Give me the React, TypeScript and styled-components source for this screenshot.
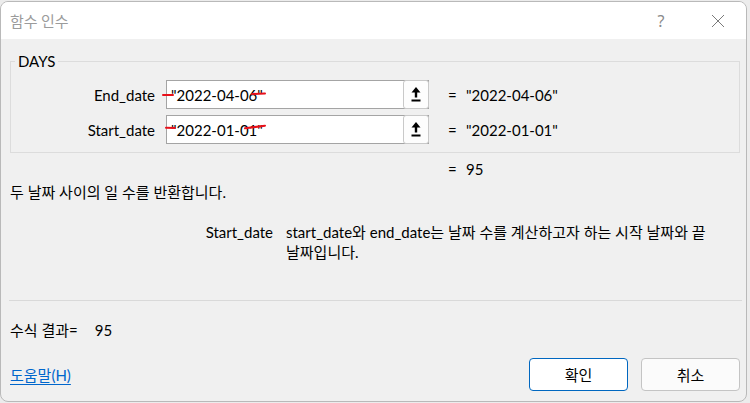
import React from "react";
import styled, { createGlobalStyle } from "styled-components";

const Global = createGlobalStyle`
  html, body { margin: 0; padding: 0; background: #ececec; }
  body { font-family: "Lato", "Noto Sans CJK KR", sans-serif; }
`;

const Window = styled.div`
  margin-top: 1px;
  width: 745px;
  height: 399px;
  border: 1px solid #b9b9b9;
  border-radius: 8px;
  overflow: hidden;
  background: #f0f0f0;
  display: flex;
  flex-direction: column;
  font-size: 15px;
  color: #000;
`;

const TitleBar = styled.div`
  height: 37px;
  background: #fff;
  display: flex;
  align-items: center;
  padding-left: 9px;
  flex-shrink: 0;
`;

const Title = styled.div`
  flex: 1;
  color: #9b9b9b;
  font-size: 15px;
  font-family: "Noto Sans CJK KR", sans-serif;
`;

const TitleButton = styled.div<{ $w: number }>`
  width: ${(p) => p.$w}px;
  height: 37px;
  display: flex;
  align-items: center;
  justify-content: center;
  color: #8a8a8a;
  font-size: 16px;
  font-family: "Noto Sans", sans-serif;
`;

const Body = styled.div`
  display: flex;
  flex-direction: column;
  padding: 0 6px 0 8px;
`;

const Group = styled.fieldset`
  margin: 12px 0 0 1px;
  padding: 0 0 8px 0;
  border: 1px solid #dcdcdc;
  width: 730px;
  box-sizing: border-box;
  min-width: 0;
`;

const Legend = styled.legend`
  margin-left: 4px;
  padding: 0 3px;
  line-height: 20px;
  font-size: 15px;
`;

const ArgGrid = styled.div`
  display: grid;
  grid-template-columns: 144px 263px 8px auto;
  column-gap: 11px;
  row-gap: 6px;
  align-items: center;
  margin-top: 9px;
`;

const ArgLabel = styled.div`
  text-align: right;
  line-height: 20px;
`;

const InputBox = styled.div`
  position: relative;
  height: 29px;
  box-sizing: border-box;
  border: 1px solid #a4a4a4;
  background: #fff;
  display: flex;
  align-items: center;
  padding-left: 4px;
`;

const InputText = styled.span`
  flex: 1;
  line-height: 20px;
`;

const RefButton = styled.div`
  width: 26px;
  height: 29px;
  margin: -1px -1px -1px 0;
  box-sizing: border-box;
  border: 1px solid #c9c9c9;
  border-radius: 3px;
  background: #fdfdfd;
  display: flex;
  align-items: center;
  justify-content: center;
`;

const Marks = styled.svg`
  position: absolute;
  left: -1px;
  top: -1px;
  pointer-events: none;
  overflow: visible;
`;

const Eq = styled.div`
  margin-left: 8px;
  line-height: 20px;
`;

const Value = styled.div`
  margin-left: 7px;
  line-height: 20px;
`;

const ResultRow = styled.div`
  display: grid;
  grid-template-columns: 8px auto;
  column-gap: 10px;
  padding-left: 439px;
  margin-top: 6px;
  line-height: 20px;
`;

const Description = styled.div`
  margin-top: 3px;
  line-height: 20px;
  padding-left: 1px;
`;

const HelpRow = styled.div`
  display: grid;
  grid-template-columns: 264px 1fr;
  column-gap: 13px;
  margin-top: 20px;
  line-height: 20px;
`;

const HelpLabel = styled.div`
  text-align: right;
`;

const Separator = styled.div`
  margin-top: 38px;
  height: 1px;
  width: 733px;
  background: #d9d9d9;
`;

const FormulaResult = styled.div`
  margin-top: 19px;
  line-height: 20px;
  padding-left: 1px;
  display: flex;
`;

const ResultValue = styled.span`
  margin-left: 17px;
`;

const Footer = styled.div`
  margin-top: 18px;
  display: flex;
  align-items: center;
  padding-left: 1px;
`;

const HelpLink = styled.a`
  color: #0066cc;
  text-decoration: underline;
  text-underline-offset: 3px;
  flex: 1;
  line-height: 20px;
  cursor: pointer;
`;

const Button = styled.button<{ $primary?: boolean }>`
  width: 99px;
  height: 33px;
  margin-left: 13px;
  box-sizing: border-box;
  border-radius: 4px;
  border: 1px solid ${(p) => (p.$primary ? "#0067c0" : "#c4c4c4")};
  background: ${(p) => (p.$primary ? "#ffffff" : "#fbfbfb")};
  font-family: "Noto Sans CJK KR", sans-serif;
  font-size: 15px;
  color: #000;
  padding: 0;
`;

const UploadIcon = () => (
  <svg width="10" height="15" viewBox="0 0 10 15">
    <polygon points="5,0 9.5,5.5 0.5,5.5" fill="#000" />
    <rect x="3.8" y="5" width="2.4" height="5.5" fill="#000" />
    <rect x="0.5" y="12.5" width="9" height="2" fill="#000" />
  </svg>
);

type Arg = {
  name: string;
  value: string;
  marks: string[];
};

const args: Arg[] = [
  {
    name: "End_date",
    value: "\"2022-04-06\"",
    marks: ["M-3 15 L7 15", "M86 14 L99 13.5"],
  },
  {
    name: "Start_date",
    value: "\"2022-01-01\"",
    marks: ["M0 12.7 L9 13", "M79 13.3 L99 10.7"],
  },
];

export default function App() {
  return (
    <>
      <Global />
      <Window>
        <TitleBar>
          <Title>함수 인수</Title>
          <TitleButton $w={58}>?</TitleButton>
          <TitleButton $w={56}>
            <svg width="14" height="14" viewBox="0 0 14 14">
              <path d="M1 1 L13 13 M13 1 L1 13" stroke="#7a7a7a" strokeWidth="1" />
            </svg>
          </TitleButton>
        </TitleBar>
        <Body>
          <Group>
            <Legend>DAYS</Legend>
            <ArgGrid>
              {args.map((a) => (
                <React.Fragment key={a.name}>
                  <ArgLabel>{a.name}</ArgLabel>
                  <InputBox>
                    <InputText>{a.value}</InputText>
                    <RefButton>
                      <UploadIcon />
                    </RefButton>
                    <Marks width="110" height="29">
                      {a.marks.map((d) => (
                        <path key={d} d={d} stroke="#e8101a" strokeWidth="2" fill="none" strokeLinecap="round" />
                      ))}
                    </Marks>
                  </InputBox>
                  <Eq>=</Eq>
                  <Value>{a.value}</Value>
                </React.Fragment>
              ))}
            </ArgGrid>
          </Group>
          <ResultRow>
            <span>=</span>
            <span>95</span>
          </ResultRow>
          <Description>두 날짜 사이의 일 수를 반환합니다.</Description>
          <HelpRow>
            <HelpLabel>Start_date</HelpLabel>
            <div>
              start_date와 end_date는 날짜 수를 계산하고자 하는 시작 날짜와 끝
              <br />
              날짜입니다.
            </div>
          </HelpRow>
          <Separator />
          <FormulaResult>
            수식 결과=<ResultValue>95</ResultValue>
          </FormulaResult>
          <Footer>
            <HelpLink>도움말(H)</HelpLink>
            <Button $primary>확인</Button>
            <Button>취소</Button>
          </Footer>
        </Body>
      </Window>
    </>
  );
}
